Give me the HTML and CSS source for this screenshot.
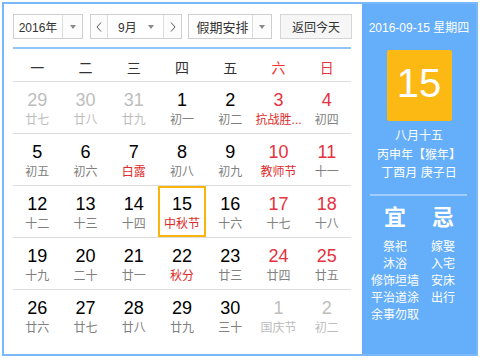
FILE: index.html
```html
<!DOCTYPE html>
<html lang="zh-CN">
<head>
<meta charset="utf-8">
<title>万年历</title>
<link rel="stylesheet" href="styles.css">
</head>
<body>
<div class="cal">
  <div class="main">
    <div class="toolbar">
      <div class="sel year"><span class="sel-text">2016年</span><span class="sel-arrow"><i class="tri"></i></span></div>
      <div class="sel month">
        <span class="nav prev"><svg width="6" height="10" viewBox="0 0 6 10"><polyline points="5,0.5 1,5 5,9.5" fill="none" stroke="#555" stroke-width="1"/></svg></span>
        <span class="month-mid"><span class="m-text">9月</span><i class="tri"></i></span>
        <span class="nav next"><svg width="6" height="10" viewBox="0 0 6 10"><polyline points="1,0.5 5,5 1,9.5" fill="none" stroke="#555" stroke-width="1"/></svg></span>
      </div>
      <div class="sel holiday"><span class="sel-text">假期安排</span><span class="sel-arrow"><i class="tri"></i></span></div>
      <button class="today-btn">返回今天</button>
    </div>
    <div class="week-head">
      <span>一</span><span>二</span><span>三</span><span>四</span><span>五</span><span class="sat">六</span><span class="sun">日</span>
    </div>
    <div class="grid">
      <div class="row">
        <div class="day other"><b class="num">29</b><span class="lunar">廿七</span></div>
        <div class="day other"><b class="num">30</b><span class="lunar">廿八</span></div>
        <div class="day other"><b class="num">31</b><span class="lunar">廿九</span></div>
        <div class="day"><b class="num">1</b><span class="lunar">初一</span></div>
        <div class="day"><b class="num">2</b><span class="lunar">初二</span></div>
        <div class="day wk"><b class="num">3</b><span class="lunar fest">抗战胜...</span></div>
        <div class="day wk"><b class="num">4</b><span class="lunar">初四</span></div>
      </div>
      <div class="row">
        <div class="day"><b class="num">5</b><span class="lunar">初五</span></div>
        <div class="day"><b class="num">6</b><span class="lunar">初六</span></div>
        <div class="day"><b class="num">7</b><span class="lunar fest">白露</span></div>
        <div class="day"><b class="num">8</b><span class="lunar">初八</span></div>
        <div class="day"><b class="num">9</b><span class="lunar">初九</span></div>
        <div class="day wk"><b class="num">10</b><span class="lunar fest">教师节</span></div>
        <div class="day wk"><b class="num">11</b><span class="lunar">十一</span></div>
      </div>
      <div class="row">
        <div class="day"><b class="num">12</b><span class="lunar">十二</span></div>
        <div class="day"><b class="num">13</b><span class="lunar">十三</span></div>
        <div class="day"><b class="num">14</b><span class="lunar">十四</span></div>
        <div class="day today"><b class="num">15</b><span class="lunar fest">中秋节</span></div>
        <div class="day"><b class="num">16</b><span class="lunar">十六</span></div>
        <div class="day wk"><b class="num">17</b><span class="lunar">十七</span></div>
        <div class="day wk"><b class="num">18</b><span class="lunar">十八</span></div>
      </div>
      <div class="row">
        <div class="day"><b class="num">19</b><span class="lunar">十九</span></div>
        <div class="day"><b class="num">20</b><span class="lunar">二十</span></div>
        <div class="day"><b class="num">21</b><span class="lunar">廿一</span></div>
        <div class="day"><b class="num">22</b><span class="lunar fest">秋分</span></div>
        <div class="day"><b class="num">23</b><span class="lunar">廿三</span></div>
        <div class="day wk"><b class="num">24</b><span class="lunar">廿四</span></div>
        <div class="day wk"><b class="num">25</b><span class="lunar">廿五</span></div>
      </div>
      <div class="row last">
        <div class="day"><b class="num">26</b><span class="lunar">廿六</span></div>
        <div class="day"><b class="num">27</b><span class="lunar">廿七</span></div>
        <div class="day"><b class="num">28</b><span class="lunar">廿八</span></div>
        <div class="day"><b class="num">29</b><span class="lunar">廿九</span></div>
        <div class="day"><b class="num">30</b><span class="lunar">三十</span></div>
        <div class="day other"><b class="num">1</b><span class="lunar">国庆节</span></div>
        <div class="day other"><b class="num">2</b><span class="lunar">初二</span></div>
      </div>
    </div>
  </div>
  <div class="side">
    <div class="side-date">2016-09-15 星期四</div>
    <div class="big">15</div>
    <div class="lunar-info">
      <div>八月十五</div>
      <div>丙申年【猴年】</div>
      <div>丁酉月 庚子日</div>
    </div>
    <div class="divider"></div>
    <div class="yiji">
      <div class="col">
        <div class="col-title">宜</div>
        <div class="col-list">
          <div>祭祀</div><div>沐浴</div><div>修饰垣墙</div><div>平治道涂</div><div>余事勿取</div>
        </div>
      </div>
      <div class="col">
        <div class="col-title">忌</div>
        <div class="col-list">
          <div>嫁娶</div><div>入宅</div><div>安床</div><div>出行</div>
        </div>
      </div>
    </div>
  </div>
</div>
</body>
</html>
```
FILE: styles.css
```css
body {
  margin: 0;
  background: #fff;
  font-family: "Liberation Sans", "Noto Sans CJK SC", sans-serif;
}
.cal {
  margin: 2px;
  width: 476px;
  height: 354px;
  box-sizing: border-box;
  border: 2px solid #79b9f9;
  display: flex;
}
.main {
  width: 358px;
  padding: 10px 0 0 9px;
  box-sizing: border-box;
}
.toolbar {
  display: flex;
  height: 25px;
}
.sel {
  display: flex;
  height: 25px;
  box-sizing: border-box;
  border: 1px solid #cfcfcf;
  background: #fff;
  color: #333;
}
.sel-text {
  display: flex;
  align-items: center;
  justify-content: center;
  font-size: 12px;
}
.sel-arrow {
  flex: 1;
  border-left: 1px solid #dcdcdc;
  display: flex;
  align-items: center;
  justify-content: center;
  background: #fcfcfc;
}
.tri {
  display: block;
  width: 0;
  height: 0;
  border-left: 3.5px solid transparent;
  border-right: 3.5px solid transparent;
  border-top: 4px solid #8a8a8a;
}
.year { width: 70px; }
.year .sel-text { width: 48px; }
.month { width: 92px; margin-left: 7px; }
.nav {
  width: 16px;
  display: flex;
  align-items: center;
  justify-content: center;
  background: #fcfcfc;
}
.prev { border-right: 1px solid #dcdcdc; }
.next { flex: 1; border-left: 1px solid #dcdcdc; }
.month-mid {
  width: 55px;
  display: flex;
  align-items: center;
  font-size: 12px;
}
.m-text { margin-left: 10px; width: 20px; }
.month-mid .tri { margin-left: 10px; }
.holiday { width: 84px; margin-left: 6px; }
.holiday .sel-text { width: 63px; font-size: 13px; padding-left: 4px; box-sizing: border-box; }
.today-btn {
  margin-left: 8px;
  width: 72px;
  height: 25px;
  padding: 0;
  border: 1px solid #d6d6d6;
  background: #f6f6f6;
  color: #333;
  font-family: inherit;
  font-size: 12px;
}
.week-head {
  margin-top: 8px;
  width: 338px;
  height: 26px;
  padding-top: 6px;
  border-top: 2px solid #8fc5f7;
  border-bottom: 1px solid #dcdcdc;
  display: grid;
  grid-template-columns: repeat(7, 1fr);
  font-size: 14px;
  line-height: 26px;
  text-align: center;
  color: #333;
}
.week-head .sat { color: #ff2f2f; }
.week-head .sun { color: #e8363f; }
.grid { width: 338px; }
.row {
  display: grid;
  grid-template-columns: repeat(7, 1fr);
  height: 51px;
  border-bottom: 1px solid #dcdcdc;
}
.row.last { border-bottom: none; }
.day {
  display: flex;
  flex-direction: column;
  align-items: center;
  padding-top: 8px;
  box-sizing: border-box;
}
.num {
  font-size: 18px;
  line-height: 20px;
  font-weight: normal;
  color: #000;
}
.lunar {
  margin-top: 2px;
  font-size: 12px;
  line-height: 16px;
  color: #808080;
  white-space: nowrap;
}
.wk .num { color: #e6323e; }
.lunar.fest { color: #e02a2a; }
.other .num, .other .lunar { color: #bdbdbd; }
.today { box-shadow: inset 0 0 0 2px #f9b50e; }
.side {
  width: 114px;
  background: #65aefa;
  color: #fff;
  text-align: center;
  padding-top: 15px;
  box-sizing: border-box;
}
.side-date { font-size: 12px; line-height: 18px; }
.big {
  width: 65px;
  height: 71px;
  margin: 13px auto 0;
  background: #fcb813;
  border-radius: 2px;
  font-size: 40px;
  line-height: 66px;
}
.lunar-info {
  margin-top: 6px;
  font-size: 12px;
  line-height: 18.5px;
}
.divider {
  margin: 11px 0 0 8px;
  width: 97px;
  height: 2px;
  background: #a0cdfb;
}
.yiji {
  display: flex;
  justify-content: center;
  margin-top: 9px;
}
.col { width: 48px; }
.col-title {
  font-size: 22px;
  line-height: 26px;
  font-weight: bold;
}
.col-list {
  margin-top: 8px;
  font-size: 12px;
  line-height: 17px;
  white-space: nowrap;
}
```
